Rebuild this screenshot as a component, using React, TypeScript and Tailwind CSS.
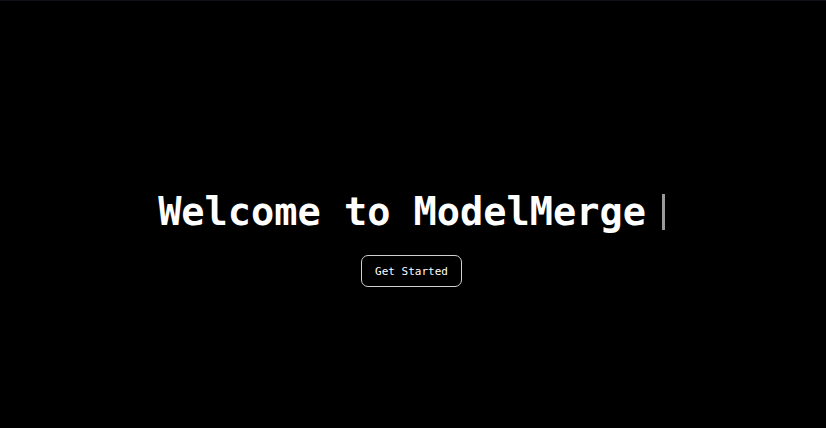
import React from "react";

export default function App() {
  return (
    <div
      className="w-full h-[428px] bg-black border-t border-[#0e1019] flex flex-col items-center pt-[193px]"
      style={{ fontFamily: '"DejaVu Sans Mono", "Liberation Mono", monospace' }}
    >
      <div className="flex items-center h-[36px] mr-[3px]">
        <h1 className="text-[38.6px] leading-[36px] font-bold text-white">
          Welcome to ModelMerge
        </h1>
        <div className="w-[3px] h-[36px] bg-[#9a9a9a] ml-[16px]" />
      </div>
      <button className="mt-[25px] h-[32px] px-[13.5px] mr-[3px] rounded-[7px] border border-[#d0d0d0] text-white text-[11px] leading-none">
        Get Started
      </button>
    </div>
  );
}
